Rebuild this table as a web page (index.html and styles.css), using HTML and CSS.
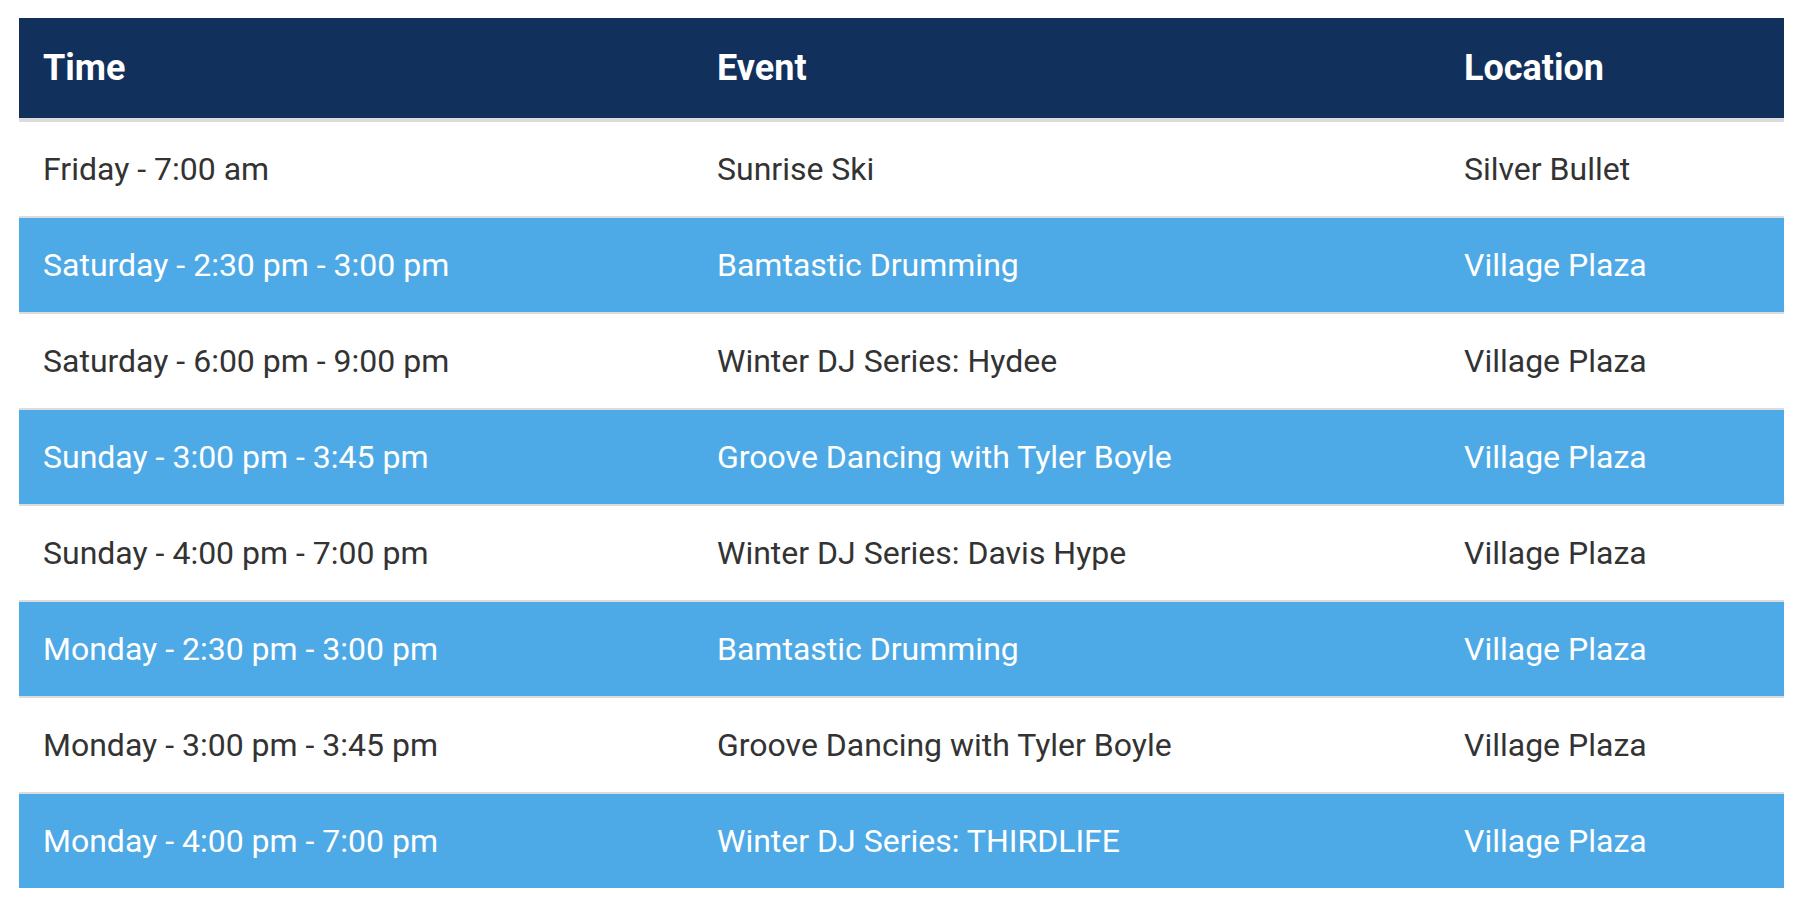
FILE: index.html
```html
<!DOCTYPE html>
<html lang="en">
<head>
<meta charset="utf-8">
<title>Events</title>
<link rel="stylesheet" href="styles.css">
</head>
<body>
<table class="schedule">
  <colgroup>
    <col class="col-time">
    <col class="col-event">
    <col class="col-loc">
  </colgroup>
  <thead>
    <tr><th>Time</th><th>Event</th><th>Location</th></tr>
  </thead>
  <tbody>
    <tr><td>Friday - 7:00 am</td><td>Sunrise Ski</td><td>Silver Bullet</td></tr>
    <tr class="alt"><td>Saturday - 2:30 pm - 3:00 pm</td><td>Bamtastic Drumming</td><td>Village Plaza</td></tr>
    <tr><td>Saturday - 6:00 pm - 9:00 pm</td><td>Winter DJ Series: Hydee</td><td>Village Plaza</td></tr>
    <tr class="alt"><td>Sunday - 3:00 pm - 3:45 pm</td><td>Groove Dancing with Tyler Boyle</td><td>Village Plaza</td></tr>
    <tr><td>Sunday - 4:00 pm - 7:00 pm</td><td>Winter DJ Series: Davis Hype</td><td>Village Plaza</td></tr>
    <tr class="alt"><td>Monday - 2:30 pm - 3:00 pm</td><td>Bamtastic Drumming</td><td>Village Plaza</td></tr>
    <tr><td>Monday - 3:00 pm - 3:45 pm</td><td>Groove Dancing with Tyler Boyle</td><td>Village Plaza</td></tr>
    <tr class="alt"><td>Monday - 4:00 pm - 7:00 pm</td><td>Winter DJ Series: THIRDLIFE</td><td>Village Plaza</td></tr>
  </tbody>
</table>
</body>
</html>
```
FILE: styles.css
```css
html, body {
  margin: 0;
  padding: 0;
  background: #ffffff;
}

body {
  padding: 18px 36px 0 19px;
  font-family: Roboto, "Liberation Sans", sans-serif;
}

.schedule {
  width: 1765px;
  border-collapse: collapse;
  table-layout: fixed;
}

.col-time { width: 674px; }
.col-event { width: 747px; }
.col-loc { width: 344px; }

.schedule th {
  background: #12305c;
  color: #ffffff;
  font-size: 36px;
  font-weight: 700;
  text-align: left;
  height: 102px;
  padding: 0 0 0 24px;
  border-bottom: 4px solid #dcdcdc;
  box-sizing: border-box;
  vertical-align: middle;
}

.schedule td {
  height: 94px;
  padding: 0 0 0 24px;
  font-size: 32px;
  color: #333333;
  background: #ffffff;
  border-top: 2px solid #dcdcdc;
  vertical-align: middle;
}

.schedule thead + tbody tr:first-child td {
  border-top: none;
}

.schedule tr.alt td {
  background: #4eaae6;
  color: #ffffff;
}
```
